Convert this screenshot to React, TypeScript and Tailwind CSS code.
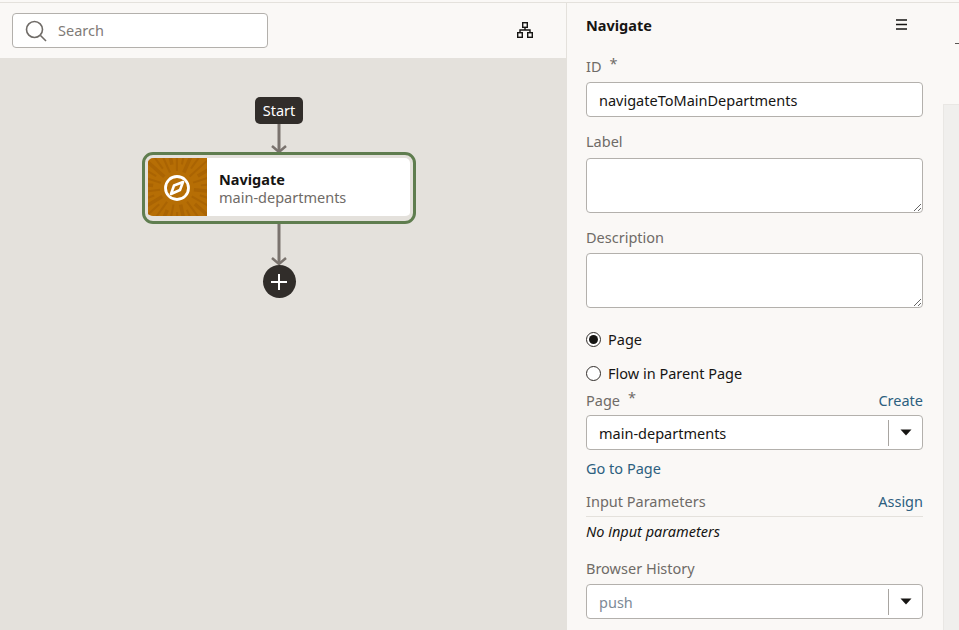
const rays = Array.from({ length: 30 }, (_, i) => {
  const a = (i * Math.PI * 2) / 30 + 0.1;
  const inner = i % 2 ? 24 : 17;
  return {
    x1: 29 + Math.cos(a) * inner,
    y1: 30 + Math.sin(a) * inner,
    x2: 29 + Math.cos(a) * 60,
    y2: 30 + Math.sin(a) * 60,
    w: i % 3 === 0 ? 3.5 : 2,
  };
});

function NodeArt() {
  return (
    <svg width="59" height="60" viewBox="0 0 59 60" className="block">
      <rect width="59" height="60" fill="#b66e05" />
      {rays.map((r, i) => (
        <line key={i} x1={r.x1} y1={r.y1} x2={r.x2} y2={r.y2} stroke="#aa6403" strokeWidth={r.w} />
      ))}
      <circle cx="29" cy="30" r="11.5" fill="none" stroke="#fff" strokeWidth="2.8" />
      <path d="M35 24 L32 32 L23 36 L26 27.5 Z" fill="#b66e05" stroke="#fff" strokeWidth="2.6" strokeLinejoin="round" />
    </svg>
  );
}

function Arrow({ height }: { height: number }) {
  return (
    <svg width="20" height={height} viewBox={`0 0 20 ${height}`} className="block">
      <path d={`M10 0 V${height - 1}`} stroke="#7a736e" strokeWidth="3" fill="none" />
      <path d={`M3 ${height - 7} L10 ${height - 1} L17 ${height - 7}`} stroke="#7a736e" strokeWidth="2.5" fill="none" />
    </svg>
  );
}

function Select({ value, muted }: { value: string; muted?: boolean }) {
  return (
    <div className="flex items-center h-[35px] bg-white border border-[#b3b0ac] rounded-[4px]">
      <span className={`flex-1 pl-3 pt-[2px] text-[14.5px] ${muted ? 'text-[#7d8a96]' : 'text-[#161513]'}`}>{value}</span>
      <div className="w-px h-[26px] bg-[#a8a5a1]" />
      <div className="w-[33px] flex justify-center">
        <svg width="12" height="7" viewBox="0 0 12 7">
          <path d="M0.5 0.5 H11.5 L6 6.5 Z" fill="#161513" />
        </svg>
      </div>
    </div>
  );
}

function Radio({ checked, label }: { checked?: boolean; label: string }) {
  return (
    <div className="flex items-center h-[20px] gap-[7px]">
      <div className="w-[15px] h-[15px] rounded-full border border-[#312d2a] flex items-center justify-center bg-white">
        {checked && <div className="w-[9px] h-[9px] rounded-full bg-[#161513]" />}
      </div>
      <span className="text-[14.5px] leading-[20px] text-[#161513]">{label}</span>
    </div>
  );
}

const labelCls = 'text-[14.5px] leading-[20px] text-[#6f6b67]';
const linkCls = 'text-[14.5px] leading-[20px] text-[#2d5f7f]';
const areaCls = 'block w-full h-[55px] bg-white border border-[#b3b0ac] rounded-[4px] resize-y outline-none';

export default function App() {
  return (
    <div className="h-[630px] overflow-hidden flex flex-col bg-[#faf8f6] font-['Noto_Sans',sans-serif]">
      <div className="h-[3px] shrink-0 border-b border-[#e4e1dc]" />
      <div className="flex flex-1 min-h-0">
        {/* Flow diagram */}
        <div className="w-[566px] flex flex-col">
          <div className="h-[55px] shrink-0 flex items-start">
            <div className="ml-3 mt-[10px] w-[256px] h-[35px] bg-white border border-[#b3b0ac] rounded-[4px] flex items-center pl-[12px] gap-[11px]">
              <svg width="22" height="22" viewBox="0 0 22 22" fill="none">
                <circle cx="9.5" cy="9.5" r="8" stroke="#6f6b67" strokeWidth="1.6" />
                <path d="M15.5 15.5 L21 21" stroke="#6f6b67" strokeWidth="1.6" />
              </svg>
              <span className="text-[14.5px] text-[#7f7b77]">Search</span>
            </div>
            <svg width="16" height="16" viewBox="0 0 16 16" fill="none" stroke="#161513" strokeWidth="1.4" className="ml-[249px] mt-[19px]">
              <rect x="5.7" y="0.7" width="4.6" height="4.6" />
              <rect x="0.7" y="10.7" width="4.6" height="4.6" />
              <rect x="10.7" y="10.7" width="4.6" height="4.6" />
              <path d="M8 5.5 V8 M3 10.5 V8 H13 V10.5" />
            </svg>
          </div>
          <div className="flex-1 bg-[#e4e1dc] pt-[39px] pl-[142px]">
            <div className="w-[274px] flex flex-col items-center">
              <div className="h-[27px] w-[48px] bg-[#312d2a] rounded-[5px] flex items-center justify-center text-white text-[14.5px]">
                Start
              </div>
              <Arrow height={29} />
              <div className="w-[274px] h-[72px] -mt-px border-[3px] border-[#5f7d4f] rounded-[11px] p-[3px]">
                <div className="flex h-[60px] bg-white rounded-[5px] overflow-hidden border-b-2 border-[#e4e1dc]">
                  <div className="w-[59px] shrink-0">
                    <NodeArt />
                  </div>
                  <div className="pl-3 pt-[12px]">
                    <div className="text-[14.5px] leading-[18px] font-bold text-[#161513] whitespace-nowrap">Navigate</div>
                    <div className="text-[14.5px] leading-[18px] text-[#6f6b67] whitespace-nowrap">main-departments</div>
                  </div>
                </div>
              </div>
              <Arrow height={41} />
              <div className="w-[33px] h-[33px] rounded-full bg-[#312d2a] flex items-center justify-center">
                <svg width="18" height="18" viewBox="0 0 18 18">
                  <path d="M9 1 V17 M1 9 H17" stroke="#fff" strokeWidth="2" />
                </svg>
              </div>
            </div>
          </div>
        </div>

        {/* Properties panel */}
        <div className="w-[377px] shrink-0 border-l border-[#e4e1dc] pl-[19px] pr-[20px]">
          <div className="flex items-center justify-between h-[45px] pr-[16px]">
            <span className="text-[14.5px] font-bold text-[#161513]">Navigate</span>
            <svg width="11" height="11" viewBox="0 0 11 11" className="-mt-[2px]">
              <path d="M0 1 H11 M0 5.5 H11 M0 10 H11" stroke="#161513" strokeWidth="1.3" />
            </svg>
          </div>
          <div className={`${labelCls} mt-[8px] flex gap-[8px]`}>
            ID <span className="text-[#6f6b67] -mt-[3px]">*</span>
          </div>
          <input
            readOnly
            value="navigateToMainDepartments"
            className="block mt-[6px] w-full h-[35px] bg-white border border-[#b3b0ac] rounded-[4px] px-3 text-[14.5px] text-[#161513] outline-none"
          />
          <div className={`${labelCls} mt-[14px]`}>Label</div>
          <textarea className={`${areaCls} mt-[7px]`} />
          <div className={`${labelCls} mt-[14px]`}>Description</div>
          <textarea className={`${areaCls} mt-[6px]`} />
          <div className="mt-[21px] flex flex-col gap-[14px]">
            <Radio checked label="Page" />
            <Radio label="Flow in Parent Page" />
          </div>
          <div className="flex justify-between mt-[7px]">
            <div className={`${labelCls} flex gap-[8px]`}>
              Page <span className="-mt-[3px]">*</span>
            </div>
            <span className={linkCls}>Create</span>
          </div>
          <div className="mt-[5px]">
            <Select value="main-departments" />
          </div>
          <div className={`${linkCls} mt-[8px]`}>Go to Page</div>
          <div className="flex justify-between mt-[13px] pb-[5px] border-b border-[#e4e1dc]">
            <span className={labelCls}>Input Parameters</span>
            <span className={linkCls}>Assign</span>
          </div>
          <div className="text-[14.5px] leading-[20px] italic text-[#161513] mt-[4px]">No input parameters</div>
          <div className={`${labelCls} mt-[17px]`}>Browser History</div>
          <div className="mt-[6px]">
            <Select value="push" muted />
          </div>
        </div>

        {/* Neighbouring panel edge */}
        <div className="flex-1 flex flex-col">
          <div className="h-[101px] shrink-0 pt-[40px] pl-[12px]">
            <div className="h-px bg-[#5a5552]" />
          </div>
          <div className="flex-1 bg-[#f0efed] border-l border-t border-[#e9e7e4]" />
        </div>
      </div>
    </div>
  );
}
